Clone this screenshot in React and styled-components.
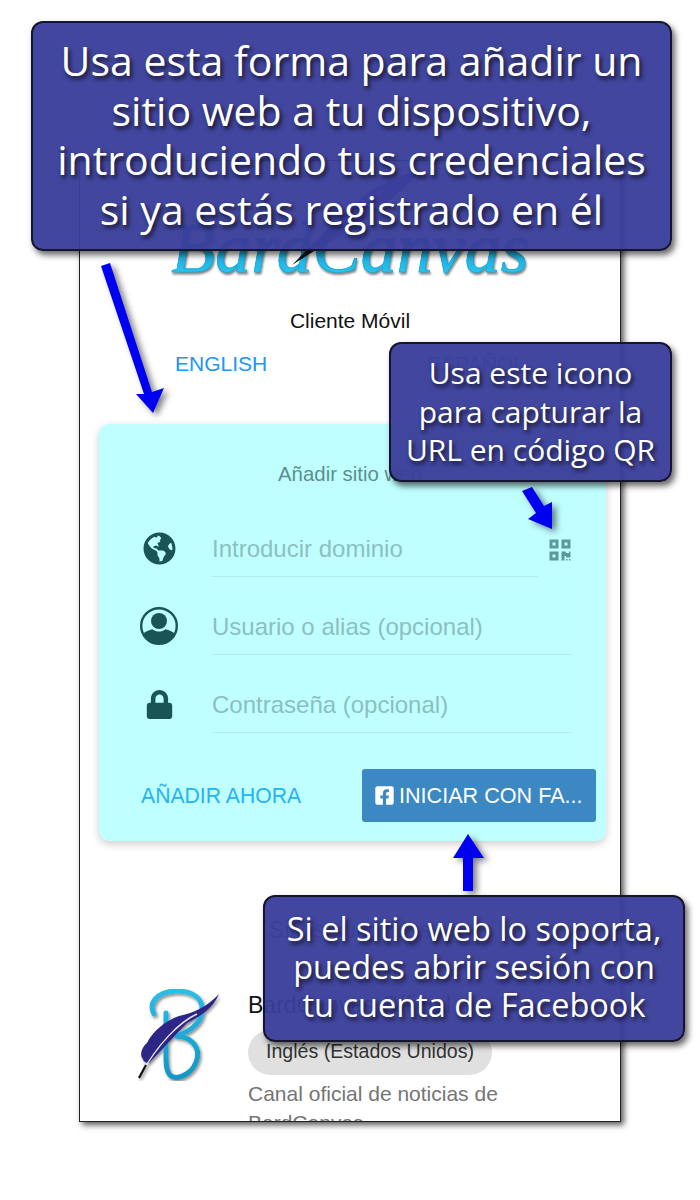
import React from 'react'
import styled, { createGlobalStyle } from 'styled-components'
import { FaGlobeAmericas, FaLock, FaFacebookSquare, FaQrcode } from 'react-icons/fa'

const Global = createGlobalStyle`
  html, body { margin: 0; padding: 0; background: #fff; }
  * { box-sizing: border-box; }
  body { font-family: "Liberation Sans", Arial, sans-serif; }
`

const App = () => {
  return (
    <>
      <Global />
      <Page>
        <Frame>
          <LogoWrap>
            <Wordmark>BardCanvas</Wordmark>
            <LogoQuill viewBox="0 0 140 100">
              <path d="M132 3 C118 8 92 14 70 34 C50 52 30 72 10 92 C34 78 62 66 88 44 C108 28 124 16 132 3 Z" fill="#2f2a8c" opacity="0.8" />
              <path d="M4 98 L22 80 L26 84 Z" fill="#111" />
            </LogoQuill>
          </LogoWrap>
          <Subtitle>Cliente Móvil</Subtitle>
          <Langs>
            <Lang>ENGLISH</Lang>
            <Lang>ESPAÑOL</Lang>
          </Langs>
          <Card>
            <CardTitle>Añadir sitio web</CardTitle>
            <Row>
              <IconCell><FaGlobeAmericas size={33} /></IconCell>
              <Field $short>Introducir dominio</Field>
              <QrButton><FaQrcode size={24} /></QrButton>
            </Row>
            <Row>
              <IconCell>
                <svg width="40" height="40" viewBox="0 0 40 40">
                  <defs>
                    <clipPath id="userClip"><circle cx="20" cy="20" r="18" /></clipPath>
                  </defs>
                  <circle cx="20" cy="20" r="17.8" fill="none" stroke="currentColor" strokeWidth="2.4" />
                  <circle cx="20" cy="15" r="8" fill="currentColor" />
                  <path d="M3 40 V30 C4 26 9 24.6 13.5 23.2 C17 26.4 23 26.4 26.5 23.2 C31 24.6 36 26 37 30 V40 Z" fill="currentColor" clipPath="url(#userClip)" />
                </svg>
              </IconCell>
              <Field>Usuario o alias (opcional)</Field>
            </Row>
            <Row>
              <IconCell><FaLock size={29} /></IconCell>
              <Field>Contraseña (opcional)</Field>
            </Row>
            <Actions>
              <TextButton>AÑADIR AHORA</TextButton>
              <FbButton><FaFacebookSquare size={21} />INICIAR CON FA...</FbButton>
            </Actions>
          </Card>
          <SectionTitle>Sitios sugeridos</SectionTitle>
          <Site>
            <SiteLogo viewBox="0 0 84 92">
              <defs>
                <linearGradient id="stemBlue" x1="0" y1="0" x2="0" y2="1">
                  <stop offset="0" stopColor="#2bbde6" />
                  <stop offset="1" stopColor="#1596c4" />
                </linearGradient>
                <filter id="logoShadow" x="-20%" y="-20%" width="140%" height="140%">
                  <feDropShadow dx="1.5" dy="2" stdDeviation="1.5" floodColor="#000" floodOpacity="0.45" />
                </filter>
              </defs>
              <g filter="url(#logoShadow)">
                <path d="M17 25 C11 14 20 3 38 2 C56 1 67 10 65 24 C63 36 50 44 38 47 C54 47 63 58 60 70 C57 83 44 90 36 88 C28 85 29 72 29 58 L29 24" fill="none" stroke="url(#stemBlue)" strokeWidth="5" strokeLinecap="round" />
                <path d="M82 5 C76 20 62 28 50 34 C38 46 26 60 12 74 C9 74 6 72 6 70 C2 66 5 58 10 54 C16 42 28 32 42 27 C56 24 70 18 82 5 Z" fill="#2d2587" />
                <path d="M60 25 C42 33 20 56 3 87" fill="none" stroke="#e4e4e4" strokeWidth="1.4" />
                <path d="M9 76 L2 89" fill="none" stroke="#111" strokeWidth="2.2" />
              </g>
            </SiteLogo>
            <SiteBody>
              <SiteName>BardCanvas Official</SiteName>
              <Chip>Inglés (Estados Unidos)</Chip>
              <SiteText>Canal oficial de noticias de BardCanvas</SiteText>
            </SiteBody>
          </Site>
        </Frame>

        <Arrow viewBox="0 0 700 1200">
          <defs>
            <filter id="arrowShadow" x="-50%" y="-50%" width="200%" height="200%">
              <feDropShadow dx="4" dy="3" stdDeviation="3" floodColor="#000" floodOpacity="0.5" />
            </filter>
          </defs>
          <g fill="#0000f0" filter="url(#arrowShadow)">
            <polygon points="101,266 110,263 152,392 164,388 153,413 136,394 144,394" />
            <polygon points="522,491 532,487 544,506 552,502 552,529 528,519 536,513" />
            <polygon points="463,891 473,891 473,858 484,858 468,834 453,858 463,858" />
          </g>
        </Arrow>

        <Callout $left={31} $top={21} $width={641} $height={230} $size={41} $line={49.5} $lift={2}>
          Usa esta forma para añadir un<br />
          sitio web a tu dispositivo,<br />
          introduciendo tus credenciales<br />
          si ya estás registrado en él
        </Callout>
        <Callout $left={389} $top={342} $width={283} $height={140} $size={30} $line={38.5}>
          Usa este icono<br />
          para capturar la<br />
          URL en código QR
        </Callout>
        <Callout $left={263} $top={895} $width={422} $height={147} $size={32.5} $line={38} $lift={4}>
          Si el sitio web lo soporta,<br />
          puedes abrir sesión con<br />
          tu cuenta de Facebook
        </Callout>
      </Page>
    </>
  )
}

export default App

const Page = styled.div`
  position: relative;
  width: 700px;
  height: 1200px;
  padding: 160px 0 0 79px;
  overflow: hidden;
`
const Frame = styled.div`
  width: 542px;
  height: 962px;
  border: 1px solid #222;
  box-shadow: 3px 3px 6px rgba(0, 0, 0, 0.65);
  background: #fff;
  overflow: hidden;
  padding: 0 14px 0 19px;
`
const LogoWrap = styled.div`
  position: relative;
  width: 502px;
  height: 136px;
  padding-top: 47px;
  text-align: center;
`
const Wordmark = styled.div`
  font-family: "Liberation Serif", serif;
  font-style: italic;
  font-size: 72px;
  line-height: 80px;
  background: linear-gradient(#0f8fc4 30%, #27c3ee 80%, #108fc0);
  -webkit-background-clip: text;
  background-clip: text;
  color: transparent;
  -webkit-text-stroke: 0.6px #1aa3d6;
  filter: drop-shadow(1px 2px 1px rgba(0, 0, 0, 0.5));
`
const LogoQuill = styled.svg`
  position: absolute;
  left: 189px;
  top: 6px;
  width: 140px;
  height: 100px;
`
const Subtitle = styled.div`
  width: 502px;
  margin-top: 10px;
  font-size: 21px;
  line-height: 28px;
  text-align: center;
  color: #111;
`
const Langs = styled.div`
  display: flex;
  justify-content: space-between;
  padding: 0 81px 0 76px;
  margin-top: 14px;
`
const Lang = styled.span`
  font-size: 21px;
  line-height: 30px;
  color: #2196f3;
`
const Card = styled.div`
  width: 507px;
  height: 417px;
  margin-top: 45px;
  padding: 33px 10px 0 34px;
  background: #bfffff;
  border-radius: 10px;
  box-shadow: 0 3px 8px rgba(0, 0, 0, 0.2);
`
const CardTitle = styled.div`
  width: 434px;
  font-size: 20.4px;
  line-height: 34px;
  color: #5b8f8f;
  text-align: center;
  margin-bottom: 19px;
`
const Row = styled.div`
  display: flex;
  align-items: center;
  height: 78px;
  padding-right: 24px;
`
const IconCell = styled.div`
  flex: none;
  width: 50px;
  margin: -2px 28px 0 1px;
  display: flex;
  justify-content: center;
  color: #1b5456;
`
const Field = styled.div`
  flex: ${p => (p.$short ? '0 0 326px' : '1')};
  height: 57px;
  margin-top: -1px;
  font-size: 24px;
  line-height: 57px;
  color: #8cbfbf;
  border-bottom: 1px solid #aeeeee;
`
const QrButton = styled.div`
  flex: none;
  margin: 2px 0 0 10px;
  display: flex;
  color: #5a9a9a;
`
const Actions = styled.div`
  display: flex;
  align-items: center;
  justify-content: space-between;
  margin-top: 25px;
`
const TextButton = styled.div`
  margin-left: 8px;
  font-size: 21.2px;
  color: #29b2f0;
`
const FbButton = styled.div`
  display: flex;
  align-items: center;
  gap: 4px;
  width: 234px;
  height: 53px;
  padding-left: 12px;
  font-size: 21.6px;
  color: #fff;
  background: #3b88c3;
  border-radius: 3px;
  white-space: nowrap;
`
const SectionTitle = styled.div`
  width: 502px;
  margin-top: 73px;
  font-size: 23px;
  line-height: 32px;
  color: #666;
  text-align: center;
`
const Site = styled.div`
  display: flex;
  align-items: flex-start;
  margin-top: 44px;
  padding-left: 38px;
`
const SiteLogo = styled.svg`
  width: 84px;
  height: 92px;
  flex: none;
  margin-right: 27px;
  margin-top: -1px;
`
const SiteBody = styled.div`
  display: flex;
  flex-direction: column;
  align-items: flex-start;
  width: 290px;
`
const SiteName = styled.div`
  font-size: 23px;
  line-height: 30px;
  color: #111;
`
const Chip = styled.div`
  margin-top: 10px;
  height: 45px;
  padding: 0 18px;
  font-size: 19.6px;
  line-height: 43px;
  color: #333;
  background: #e0e0e0;
  border-radius: 23px;
`
const SiteText = styled.div`
  margin-top: 4px;
  font-size: 21px;
  line-height: 29px;
  color: #757575;
`
const Arrow = styled.svg`
  position: absolute;
  left: 0;
  top: 0;
  width: 700px;
  height: 1200px;
  pointer-events: none;
`
const Callout = styled.div`
  position: absolute;
  left: ${p => p.$left}px;
  top: ${p => p.$top}px;
  width: ${p => p.$width}px;
  height: ${p => p.$height}px;
  padding-bottom: ${p => p.$lift || 0}px;
  display: flex;
  align-items: center;
  justify-content: center;
  text-align: center;
  font-family: "Open Sans", sans-serif;
  font-size: ${p => p.$size}px;
  line-height: ${p => p.$line}px;
  color: #fff;
  text-shadow: 2px 3px 4px rgba(0, 0, 0, 0.75);
  background: rgba(58, 62, 154, 0.96);
  border: 2px solid #15152e;
  border-radius: 12px;
  box-shadow: 3px 4px 6px rgba(0, 0, 0, 0.6);
`
